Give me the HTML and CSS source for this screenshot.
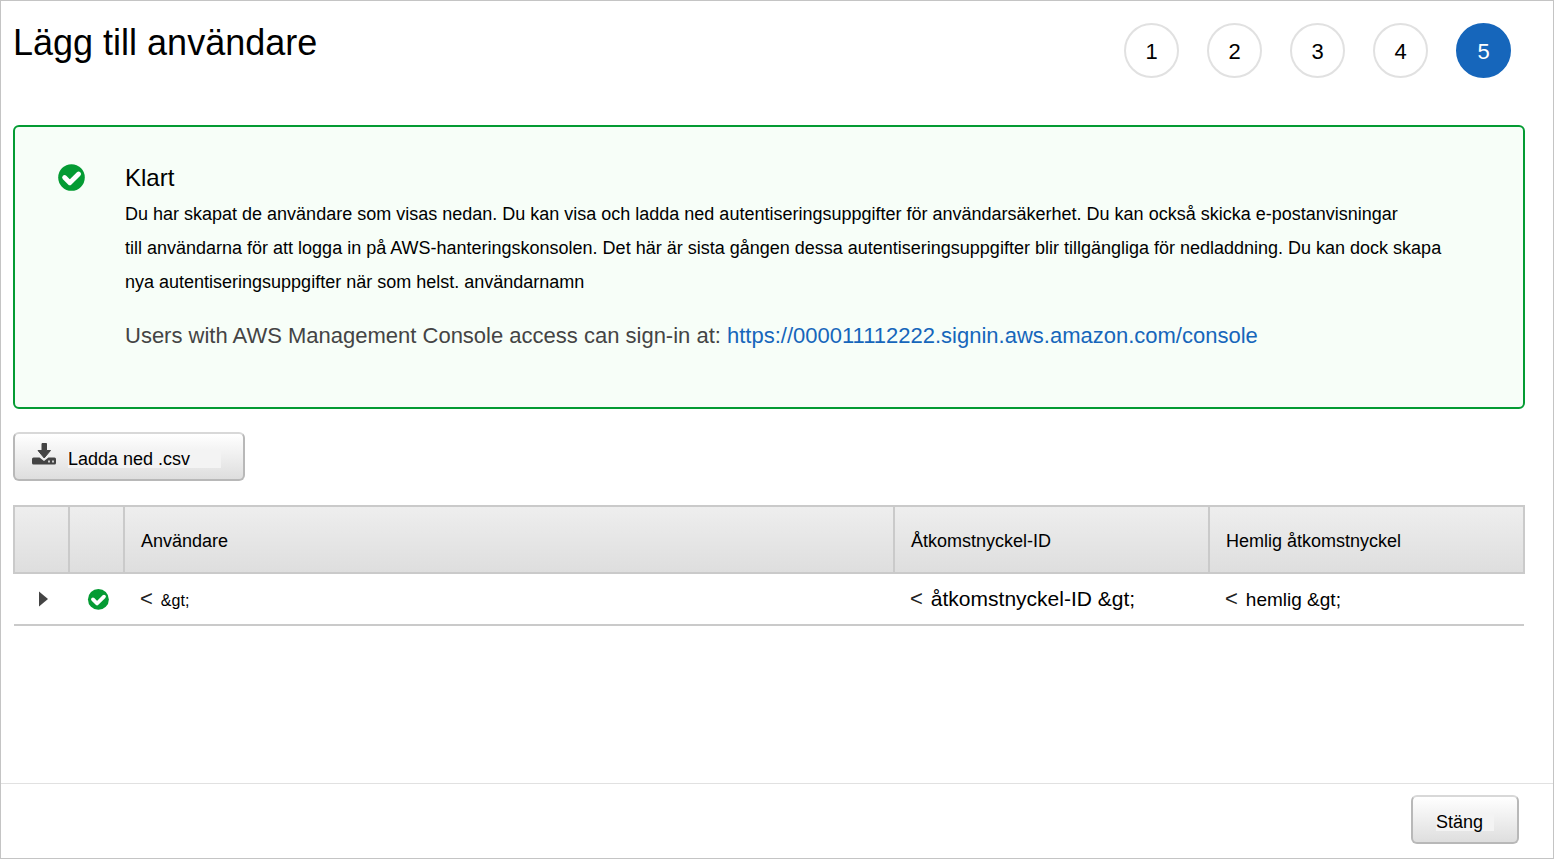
FILE: index.html
```html
<!DOCTYPE html>
<html lang="sv">
<head>
<meta charset="utf-8">
<title>Lägg till användare</title>
<link rel="stylesheet" href="styles.css">
</head>
<body>
<svg class="symbols" aria-hidden="true">
  <symbol id="check" viewBox="0 0 28 28">
    <circle cx="14.500" cy="14.500" r="13.300" fill="#049b33"/>
    <path d="M7.600 14.500 L12.800 19.700 L21.600 11" fill="none" stroke="#fff" stroke-width="4.800" stroke-linejoin="round" stroke-linecap="round"/>
  </symbol>
</svg>
<div class="page">
  <header class="header">
    <h1 class="title">Lägg till användare</h1>
    <ol class="steps">
      <li class="step">1</li>
      <li class="step">2</li>
      <li class="step">3</li>
      <li class="step">4</li>
      <li class="step step-current" aria-current="step">5</li>
    </ol>
  </header>

  <main class="content">
    <section class="alert">
      <svg class="alert-icon" role="img" aria-label="Klart"><use href="#check"/></svg>
      <div class="alert-body">
        <h2 class="alert-title">Klart</h2>
        <p class="alert-text">Du har skapat de användare som visas nedan. Du kan visa och ladda ned autentiseringsuppgifter för användarsäkerhet. Du kan också skicka e-postanvisningar<br>till användarna för att logga in på AWS-hanteringskonsolen. Det här är sista gången dessa autentiseringsuppgifter blir tillgängliga för nedladdning. Du kan dock skapa<br>nya autentiseringsuppgifter när som helst. användarnamn</p>
        <p class="signin" lang="en">Users with AWS Management Console access can sign-in at: <a class="link" href="https://000011112222.signin.aws.amazon.com/console">https://000011112222.signin.aws.amazon.com/console</a></p>
      </div>
    </section>

    <button class="button button-download" type="button">
      <svg class="download-icon" viewBox="0 0 24 22" aria-hidden="true">
        <path fill="#444" d="M1.500 14.500h6l4.500 3.500 4.500-3.500h6q1.500 0 1.500 1.500v4q0 1.500-1.500 1.500h-21Q0 21.500 0 20v-4q0-1.500 1.500-1.500z"/>
        <path fill="#444" stroke="#444" stroke-linejoin="round" d="M10 .5h4.500V7.500H18.500L12.200 15 6 7.500h4z"/>
        <path fill="#ccc" d="M16 17.500h2v2h-2zM20 17.500h2v2h-2z"/>
      </svg>
      <span class="label">Ladda ned .csv</span>
    </button>

    <table class="users">
      <colgroup>
        <col class="col-icon"><col class="col-icon"><col class="col-user"><col class="col-key"><col class="col-key">
      </colgroup>
      <thead>
        <tr>
          <th></th>
          <th></th>
          <th>Användare</th>
          <th>Åtkomstnyckel-ID</th>
          <th>Hemlig åtkomstnyckel</th>
        </tr>
      </thead>
      <tbody>
        <tr>
          <td class="cell-icon"><button class="expander" type="button" aria-label="Visa information"><svg class="arrow" viewBox="0 0 9 16" aria-hidden="true"><path fill="#444" d="M0 0.500 9 8 0 15.500z"/></svg></button></td>
          <td class="cell-icon"><svg class="row-check" role="img" aria-label="Klart"><use href="#check"/></svg></td>
          <td><span class="value"><span class="lt">&lt;</span><span class="text-small">&amp;gt;</span></span></td>
          <td><span class="value"><span class="lt">&lt;</span><span class="text-large">åtkomstnyckel-ID &amp;gt;</span></span></td>
          <td><span class="value"><span class="lt">&lt;</span><span class="text-medium">hemlig &amp;gt;</span></span></td>
        </tr>
      </tbody>
    </table>
  </main>

  <footer class="footer">
    <button class="button button-close" type="button"><span class="label">Stäng</span></button>
  </footer>
</div>
</body>
</html>
```
FILE: styles.css
```css
* {
  box-sizing: border-box;
}

body {
  margin: 0;
  background: #fff;
  color: #000;
  font-family: "Liberation Sans", Arial, sans-serif;
  font-size: 18px;
}

.symbols {
  display: none;
}

.page {
  display: flex;
  flex-direction: column;
  min-height: 100vh;
  border: 1px solid #c4c4c4;
}

.header {
  display: flex;
  justify-content: space-between;
  align-items: flex-start;
  padding: 22px 42px 0 12px;
}

.title {
  margin: 0;
  font-size: 36px;
  font-weight: 400;
  line-height: 40px;
}

.steps {
  display: flex;
  gap: 28px;
  margin: 0;
  padding: 0;
  list-style: none;
}

.step {
  display: flex;
  align-items: center;
  justify-content: center;
  width: 55px;
  height: 55px;
  padding-top: 3px;
  border: 2px solid #e1e1e1;
  border-radius: 50%;
  font-size: 22px;
}

.step-current {
  border-color: #1666bb;
  background: #1666bb;
  color: #fff;
}

.content {
  flex: 1;
  padding: 47px 28px 24px 12px;
}

.alert {
  display: flex;
  gap: 40px;
  padding: 36px 72px 54px 42px;
  border: 2px solid #049b33;
  border-radius: 6px;
  background: #f7fef8;
}

.alert-icon {
  flex: none;
  width: 28px;
  height: 28px;
}

.alert-title {
  margin: 0;
  font-size: 24px;
  font-weight: 400;
  line-height: 30px;
}

.alert-text {
  margin: 4px 0 20px;
  line-height: 34px;
}

.signin {
  margin: 0;
  color: #444;
  font-size: 22px;
  line-height: 34px;
}

.link {
  color: #1666bb;
  text-decoration: none;
}

.button {
  height: 49px;
  border: 2px solid #b8b8b8;
  border-top-color: #d8d8d8;
  border-radius: 6px;
  background: linear-gradient(#fff, #dedede);
  color: #000;
  font: inherit;
}

.label {
  background: #f3f3f3;
  line-height: 18px;
}

.button-download {
  display: flex;
  align-items: center;
  gap: 12px;
  width: 232px;
  margin: 23px 0 24px;
  padding: 5px 22px 0 17px;
}

.button-download .label {
  flex: 1;
  text-align: left;
}

.download-icon {
  width: 24px;
  height: 22px;
  margin-bottom: 10px;
}

.users {
  width: 100%;
  border-collapse: collapse;
  table-layout: fixed;
}

.col-icon {
  width: 55px;
}

.col-key {
  width: 315px;
}

.users th {
  height: 67px;
  padding: 4px 16px 0;
  border: 2px solid #cacaca;
  background: linear-gradient(#eee, #dedede);
  font-weight: 400;
  text-align: left;
}

.users td {
  height: 52px;
  padding: 0 16px;
  border-bottom: 2px solid #cacaca;
}

.users .cell-icon {
  padding: 0 0 0 3px;
  text-align: center;
}

.expander {
  padding: 4px;
  border: 0;
  background: none;
  vertical-align: middle;
}

.arrow {
  display: block;
  width: 9px;
  height: 16px;
}

.row-check {
  width: 22px;
  height: 22px;
  vertical-align: middle;
}

.value {
  display: flex;
  align-items: baseline;
  gap: 8px;
}

.lt {
  color: #222;
  font-size: 22px;
}

.text-small {
  font-size: 16px;
}

.text-medium {
  font-size: 19px;
}

.text-large {
  font-size: 21px;
}

.footer {
  display: flex;
  justify-content: flex-end;
  padding: 11px 34px 14px;
  border-top: 1px solid #e1e1e1;
}

.button-close {
  padding: 4px 23px 0;
}

.button-close .label {
  display: block;
  padding-right: 11px;
}
```
